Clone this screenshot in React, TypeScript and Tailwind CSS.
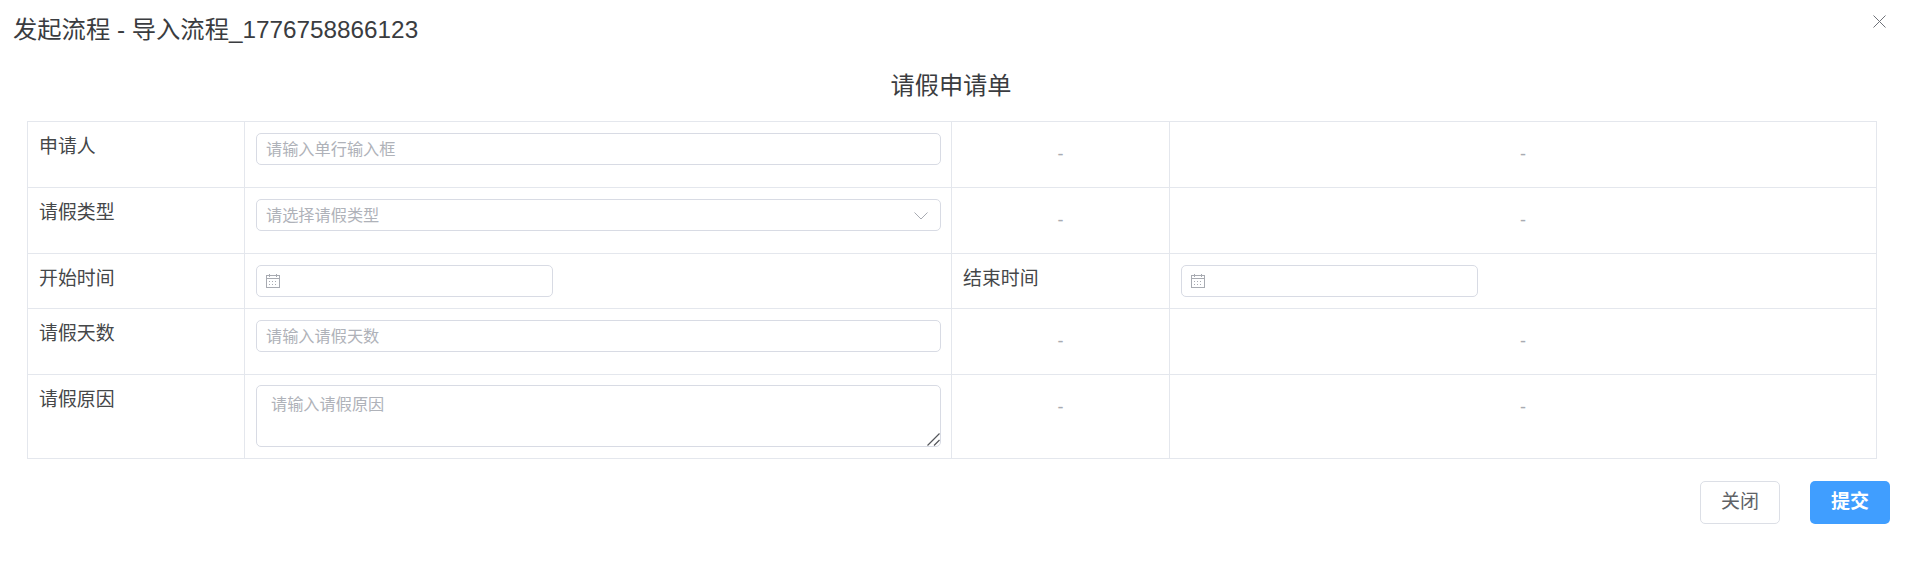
import React from "react";

const font = { fontFamily: '"Liberation Sans", "Noto Sans CJK SC", sans-serif' };

function CalendarIcon() {
  return (
    <svg width="16" height="16" viewBox="0 0 16 16" fill="none" stroke="#a8abb2" strokeWidth="1" className="shrink-0">
      <rect x="1.5" y="2.5" width="13" height="12" />
      <path d="M1.5 5.5h13M4.5 1v3M11.5 1v3" />
      <path d="M4 8.5h2M7 8.5h2M10 8.5h2M4 11.5h2M7 11.5h2M10 11.5h2" strokeDasharray="1 1" />
    </svg>
  );
}

function TextInput({ placeholder }: { placeholder: string }) {
  return (
    <input
      placeholder={placeholder}
      className="block w-full h-8 px-[9px] pt-[1px] rounded-[5px] border border-[#d8dbe4] text-[16.2px] text-[#606266] outline-none placeholder:text-[#afb2b9]"
    />
  );
}

function SelectInput({ placeholder }: { placeholder: string }) {
  return (
    <div className="flex items-center justify-between w-full h-8 pl-[9px] pr-[11px] pt-[1px] rounded-[5px] border border-[#d8dbe4] text-[16.2px] text-[#afb2b9]">
      <span>{placeholder}</span>
      <svg width="16" height="10" viewBox="0 0 16 10" fill="none" stroke="#a8abb2" strokeWidth="1">
        <path d="M1.5 1.5L8 8l6.5-6.5" />
      </svg>
    </div>
  );
}

function DateInput() {
  return (
    <div className="flex items-center w-[297px] h-8 pl-[8px] rounded-[5px] border border-[#d8dbe4]">
      <CalendarIcon />
    </div>
  );
}

function Label({ children }: { children: React.ReactNode }) {
  return <td className="border border-[#e4e7ed] px-[11px] pt-[11px] align-top text-[18.9px] leading-[28px] text-[#454749]">{children}</td>;
}

function Field({ children }: { children: React.ReactNode }) {
  return <td className="border border-[#e4e7ed] pl-[11px] pr-[10px] pt-[11px] align-top">{children}</td>;
}

function Empty() {
  return <td className="border border-[#e4e7ed] pt-[20px] align-top text-center text-[18px] leading-[24px] text-[#a8abb2]">-</td>;
}

export default function App() {
  return (
    <div className="bg-white h-[561px] overflow-hidden relative" style={font}>
      {/* Header */}
      <div className="px-[13px] pt-[15px] h-[63px] text-[24.3px] leading-[30px] text-[#3a3c40]">
        发起流程 - 导入流程_1776758866123
      </div>
      <button className="absolute right-[26px] top-[15px]">
        <svg width="13" height="13" viewBox="0 0 13 13" stroke="#6f7279" strokeWidth="1" fill="none" className="block">
          <path d="M0.5 0.5l12 12M12.5 0.5l-12 12" />
        </svg>
      </button>

      <div className="pl-[27px] pr-[35px]">
        <h2 className="text-center text-[24.2px] leading-[32px] text-[#3a3c40] h-[58px] pt-[7px] pr-[2px] font-normal">请假申请单</h2>

        {/* Form table */}
        <table className="w-full table-fixed border-collapse">
          <colgroup>
            <col className="w-[217px]" />
            <col className="w-[707px]" />
            <col className="w-[218px]" />
            <col />
          </colgroup>
          <tbody>
            <tr className="h-[66px]">
              <Label>申请人</Label>
              <Field><TextInput placeholder="请输入单行输入框" /></Field>
              <Empty />
              <Empty />
            </tr>
            <tr className="h-[66px]">
              <Label>请假类型</Label>
              <Field><SelectInput placeholder="请选择请假类型" /></Field>
              <Empty />
              <Empty />
            </tr>
            <tr className="h-[55px]">
              <Label>开始时间</Label>
              <Field><DateInput /></Field>
              <Label>结束时间</Label>
              <Field><DateInput /></Field>
            </tr>
            <tr className="h-[66px]">
              <Label>请假天数</Label>
              <Field><TextInput placeholder="请输入请假天数" /></Field>
              <Empty />
              <Empty />
            </tr>
            <tr className="h-[84px]">
              <Label>请假原因</Label>
              <Field>
                <div className="relative -mt-px">
                  <textarea
                    placeholder="请输入请假原因"
                    className="block w-full h-[62px] resize-none px-[14px] py-[6px] rounded-[5px] border border-[#d8dbe4] text-[16.2px] leading-[24px] outline-none placeholder:text-[#afb2b9]"
                  />
                  {/* resize grip */}
                  <svg width="13" height="13" viewBox="0 0 13 13" stroke="#55575b" strokeWidth="1.2" fill="none" className="absolute right-px bottom-px">
                    <path d="M12.5 0.5L0.5 12.5M12.5 7L7 12.5" />
                  </svg>
                </div>
              </Field>
              <Empty />
              <Empty />
            </tr>
          </tbody>
        </table>
      </div>

      {/* Footer */}
      <div className="flex justify-end gap-[30px] pr-[22px] pt-[22px]">
        <button className="w-[80px] h-[43px] rounded-[5px] border border-[#dcdfe6] bg-white text-[19px] text-[#606266]">关闭</button>
        <button className="w-[80px] h-[43px] rounded-[5px] bg-[#409eff] text-[19px] font-bold text-white">提交</button>
      </div>
    </div>
  );
}
